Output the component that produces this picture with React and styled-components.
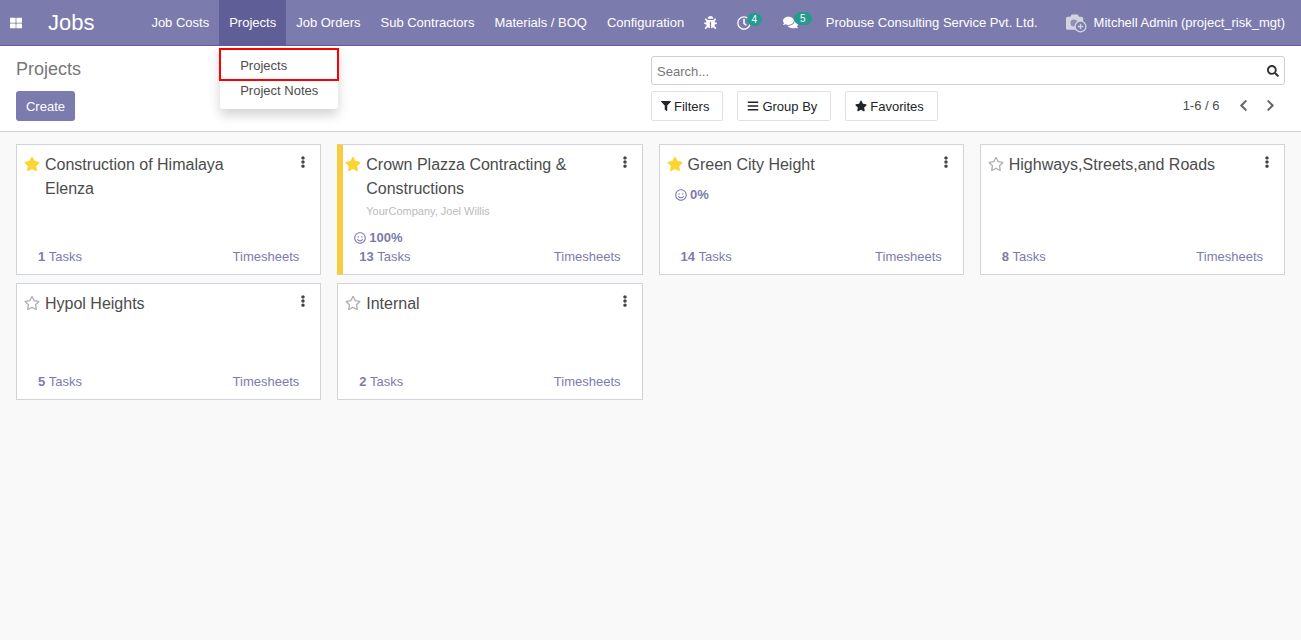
import React from "react";
import styled, { createGlobalStyle } from "styled-components";
import {
  FaBars,
  FaBug,
  FaChevronLeft,
  FaChevronRight,
  FaComments,
  FaEllipsisV,
  FaFilter,
  FaRegClock,
  FaRegSmile,
  FaRegStar,
  FaSearch,
  FaStar,
  FaThLarge,
} from "react-icons/fa";

const GlobalStyle = createGlobalStyle`
  html, body {
    margin: 0;
    height: 100%;
    background: #f9f9f9;
    font-family: "Liberation Sans", Arial, sans-serif;
    font-size: 13px;
    color: #4c4c4c;
  }
`;

const projects = [
  { name: ["Construction of Himalaya", "Elenza"], tasks: 1, fav: true },
  {
    name: ["Crown Plazza Contracting &", "Constructions"],
    tasks: 13,
    fav: true,
    color: true,
    sub: "YourCompany, Joel Willis",
    rate: "100%",
  },
  { name: ["Green City Height"], tasks: 14, fav: true, rate: "0%", topRate: true },
  { name: ["Highways,Streets,and Roads"], tasks: 8 },
  { name: ["Hypol Heights"], tasks: 5, short: true },
  { name: ["Internal"], tasks: 2, short: true },
];

const menuItems = ["Job Costs", "Projects", "Job Orders", "Sub Contractors", "Materials / BOQ", "Configuration"];

const Page = styled.div`
  height: 640px;
  overflow: hidden;
  display: flex;
  flex-direction: column;
`;

const Navbar = styled.header`
  height: 45px;
  flex: none;
  display: flex;
  align-items: stretch;
  background: #7c7bad;
  border-bottom: 1px solid #5f5e97;
  color: #fff;
`;

const AppsButton = styled.div`
  width: 32px;
  display: flex;
  align-items: center;
  justify-content: center;
  font-size: 12px;
`;

const Brand = styled.div`
  margin-left: 16px;
  width: 93.4px;
  font-size: 22px;
  line-height: 45px;
`;

const MenuItem = styled.div`
  position: relative;
  padding: 0 10px;
  line-height: 45px;
  background: ${(p) => (p.$active ? "#5f5e97" : "transparent")};
  white-space: nowrap;
`;

const Dropdown = styled.div`
  position: absolute;
  top: 46px;
  left: 1px;
  width: 118px;
  height: 63px;
  background: #fff;
  border-radius: 0 0 3px 3px;
  box-shadow: 0 6px 12px rgba(0, 0, 0, 0.175);
  color: #4c4c4c;
  z-index: 5;
`;

const HighlightBox = styled.div`
  position: absolute;
  top: 2px;
  left: -1px;
  width: 97px;
  height: 29px;
  border: 2px solid #f00;
  line-height: 31px;
  padding-left: 19px;
`;

const NotesItem = styled.div`
  position: absolute;
  top: 32px;
  left: 0;
  height: 25px;
  line-height: 25px;
  padding-left: 20px;
`;

const Systray = styled.div`
  margin-left: auto;
  display: flex;
  align-items: center;
  padding-right: 16px;
  white-space: nowrap;
`;

const TrayIcon = styled.span`
  position: relative;
  display: flex;
  align-items: center;
  font-size: ${(p) => p.$size || 14}px;
  margin-left: ${(p) => p.$left || 0}px;
`;

const Badge = styled.span`
  position: absolute;
  top: -3px;
  left: ${(p) => p.$left}px;
  width: ${(p) => p.$width}px;
  height: 13px;
  line-height: 13px;
  border-radius: 7px;
  background: #269a8e;
  color: #fff;
  font-size: 10px;
  text-align: center;
`;

const Company = styled.span`
  margin-left: 28px;
`;

const Avatar = styled.svg`
  margin-left: 27px;
  margin-right: 7px;
  display: block;
`;

const ControlPanel = styled.section`
  height: 86px;
  flex: none;
  box-sizing: border-box;
  background: #fff;
  border-bottom: 1px solid #cfcfcf;
  display: grid;
  grid-template-columns: 651px 1fr;
  padding-right: 16px;
`;

const PanelLeft = styled.div`
  padding: 13px 0 0 16px;
`;

const Breadcrumb = styled.div`
  font-size: 18px;
  line-height: 21px;
  color: #777;
`;

const CreateButton = styled.button`
  display: block;
  margin-top: 11px;
  width: 59px;
  height: 30px;
  padding: 0;
  border: 0;
  border-radius: 3px;
  background: #7c7bad;
  color: #fff;
  font: inherit;
`;

const PanelRight = styled.div`
  padding-top: 10px;
`;

const SearchBox = styled.div`
  height: 29px;
  box-sizing: border-box;
  border: 1px solid #cfcfcf;
  border-radius: 3px;
  display: flex;
  align-items: center;
  justify-content: space-between;
  padding: 1px 5px 0 5px;
  color: #777;
  svg {
    color: #333;
    font-size: 12px;
  }
`;

const SearchRow = styled.div`
  margin-top: 6px;
  display: flex;
  align-items: center;
`;

const FilterButton = styled.div`
  height: 30px;
  box-sizing: border-box;
  display: flex;
  align-items: center;
  gap: 3px;
  padding: 0 13px 0 9px;
  margin-right: 14px;
  border: 1px solid #dee2e6;
  border-radius: 2px;
  color: #212529;
  svg {
    width: ${(p) => p.$icon}px;
    height: 12px;
  }
`;

const Pager = styled.div`
  margin-left: auto;
  padding: 0 8.5px 2px 0;
  display: flex;
  align-items: center;
  color: #4c4c4c;
  svg {
    color: #666;
    font-size: 13px;
    margin-left: 14px;
  }
  svg:first-of-type {
    margin-left: 17px;
  }
`;

const Board = styled.main`
  flex: 1;
  display: grid;
  grid-template-columns: repeat(4, 1fr);
  grid-auto-rows: min-content;
  column-gap: 16px;
  row-gap: 8px;
  padding: 12px 16px 0;
`;

const Card = styled.article`
  position: relative;
  box-sizing: border-box;
  height: ${(p) => (p.$short ? 117 : 131)}px;
  background: #fff;
  border: 1px solid #ced4da;
  border-left: ${(p) => (p.$color ? "6px solid #f7cd3f" : "1px solid #ced4da")};
  padding: 8px 8px 0 ${(p) => (p.$color ? 2 : 7)}px;
  display: flex;
  flex-direction: column;
`;

const TitleRow = styled.div`
  display: flex;
  align-items: flex-start;
`;

const StarWrap = styled.span`
  flex: none;
  width: 21px;
  height: 24px;
  margin-top: -1px;
  display: flex;
  align-items: center;
  font-size: 16px;
  color: ${(p) => (p.$on ? "#fcd530" : "#b0b0b0")};
`;

const Title = styled.div`
  font-size: 16px;
  line-height: 24px;
  color: #4c4c4c;
`;

const Menu = styled.span`
  position: absolute;
  top: 11px;
  right: 11px;
  font-size: 12px;
  color: #444;
  display: flex;
`;

const SubTitle = styled.div`
  margin: 3px 0 0 21px;
  font-size: 11px;
  line-height: 14px;
  color: #bbb;
`;

const Rate = styled.div`
  display: flex;
  align-items: center;
  gap: 3px;
  margin-left: ${(p) => (p.$color ? 9 : 8.5)}px;
  margin-top: ${(p) => (p.$top ? 10 : 12)}px;
  font-weight: bold;
  line-height: 15px;
  color: #7c7bad;
  svg {
    font-size: 12px;
  }
`;

const Footer = styled.div`
  position: absolute;
  left: ${(p) => (p.$color ? 16 : 21)}px;
  right: 21px;
  bottom: 10px;
  display: flex;
  justify-content: space-between;
  line-height: 15px;
  color: #7c7bad;
  b {
    margin-right: 3.5px;
  }
`;

function CameraPlus() {
  return (
    <Avatar width="22" height="20" viewBox="0 0 22 20">
      <path
        d="M1 5.5c0-1 .8-1.8 1.8-1.8h2.6L6.6 1.6h6.2l1.2 2.1h2.4c1 0 1.8.8 1.8 1.8V15c0 1-.8 1.8-1.8 1.8H2.8C1.8 16.8 1 16 1 15z"
        fill="#d3d3de"
      />
      <circle cx="9" cy="10" r="3.6" fill="#8f8eb8" />
      <circle cx="15.5" cy="13.5" r="5.4" fill="#7c7bad" stroke="#d3d3de" strokeWidth="1.3" />
      <path d="M15.5 10.8v5.4M12.8 13.5h5.4" stroke="#d3d3de" strokeWidth="1.3" />
    </Avatar>
  );
}

function ProjectCard({ project }) {
  const { name, tasks, fav, color, sub, rate, topRate, short } = project;
  return (
    <Card $color={color} $short={short}>
      <TitleRow>
        <StarWrap $on={fav}>{fav ? <FaStar /> : <FaRegStar />}</StarWrap>
        <Title>
          {name.map((line) => (
            <div key={line}>{line}</div>
          ))}
        </Title>
      </TitleRow>
      <Menu>
        <FaEllipsisV />
      </Menu>
      {sub && <SubTitle>{sub}</SubTitle>}
      {rate && (
        <Rate $color={color} $top={topRate}>
          <FaRegSmile />
          {rate}
        </Rate>
      )}
      <Footer $color={color}>
        <span>
          <b>{tasks}</b>Tasks
        </span>
        <span>Timesheets</span>
      </Footer>
    </Card>
  );
}

export default function App() {
  return (
    <Page>
      <GlobalStyle />
      <Navbar>
        <AppsButton>
          <FaThLarge />
        </AppsButton>
        <Brand>Jobs</Brand>
        {menuItems.map((item) => (
          <MenuItem key={item} $active={item === "Projects"}>
            {item}
            {item === "Projects" && (
              <Dropdown>
                <HighlightBox>Projects</HighlightBox>
                <NotesItem>Project Notes</NotesItem>
              </Dropdown>
            )}
          </MenuItem>
        ))}
        <Systray>
          <TrayIcon $size={13}>
            <FaBug />
          </TrayIcon>
          <TrayIcon $left={20} $size={14}>
            <FaRegClock />
            <Badge $left={10} $width={15}>4</Badge>
          </TrayIcon>
          <TrayIcon $left={32} $size={15}>
            <FaComments />
            <Badge $left={11} $width={18}>5</Badge>
          </TrayIcon>
          <Company>Probuse Consulting Service Pvt. Ltd.</Company>
          <CameraPlus />
          <span>Mitchell Admin (project_risk_mgt)</span>
        </Systray>
      </Navbar>
      <ControlPanel>
        <PanelLeft>
          <Breadcrumb>Projects</Breadcrumb>
          <CreateButton>Create</CreateButton>
        </PanelLeft>
        <PanelRight>
          <SearchBox>
            <span>Search...</span>
            <FaSearch />
          </SearchBox>
          <SearchRow>
            <FilterButton $icon={10}>
              <FaFilter />
              Filters
            </FilterButton>
            <FilterButton $icon={12}>
              <FaBars />
              Group By
            </FilterButton>
            <FilterButton $icon={12}>
              <FaStar />
              Favorites
            </FilterButton>
            <Pager>
              1-6 / 6
              <FaChevronLeft />
              <FaChevronRight />
            </Pager>
          </SearchRow>
        </PanelRight>
      </ControlPanel>
      <Board>
        {projects.map((project) => (
          <ProjectCard key={project.name[0]} project={project} />
        ))}
      </Board>
    </Page>
  );
}
